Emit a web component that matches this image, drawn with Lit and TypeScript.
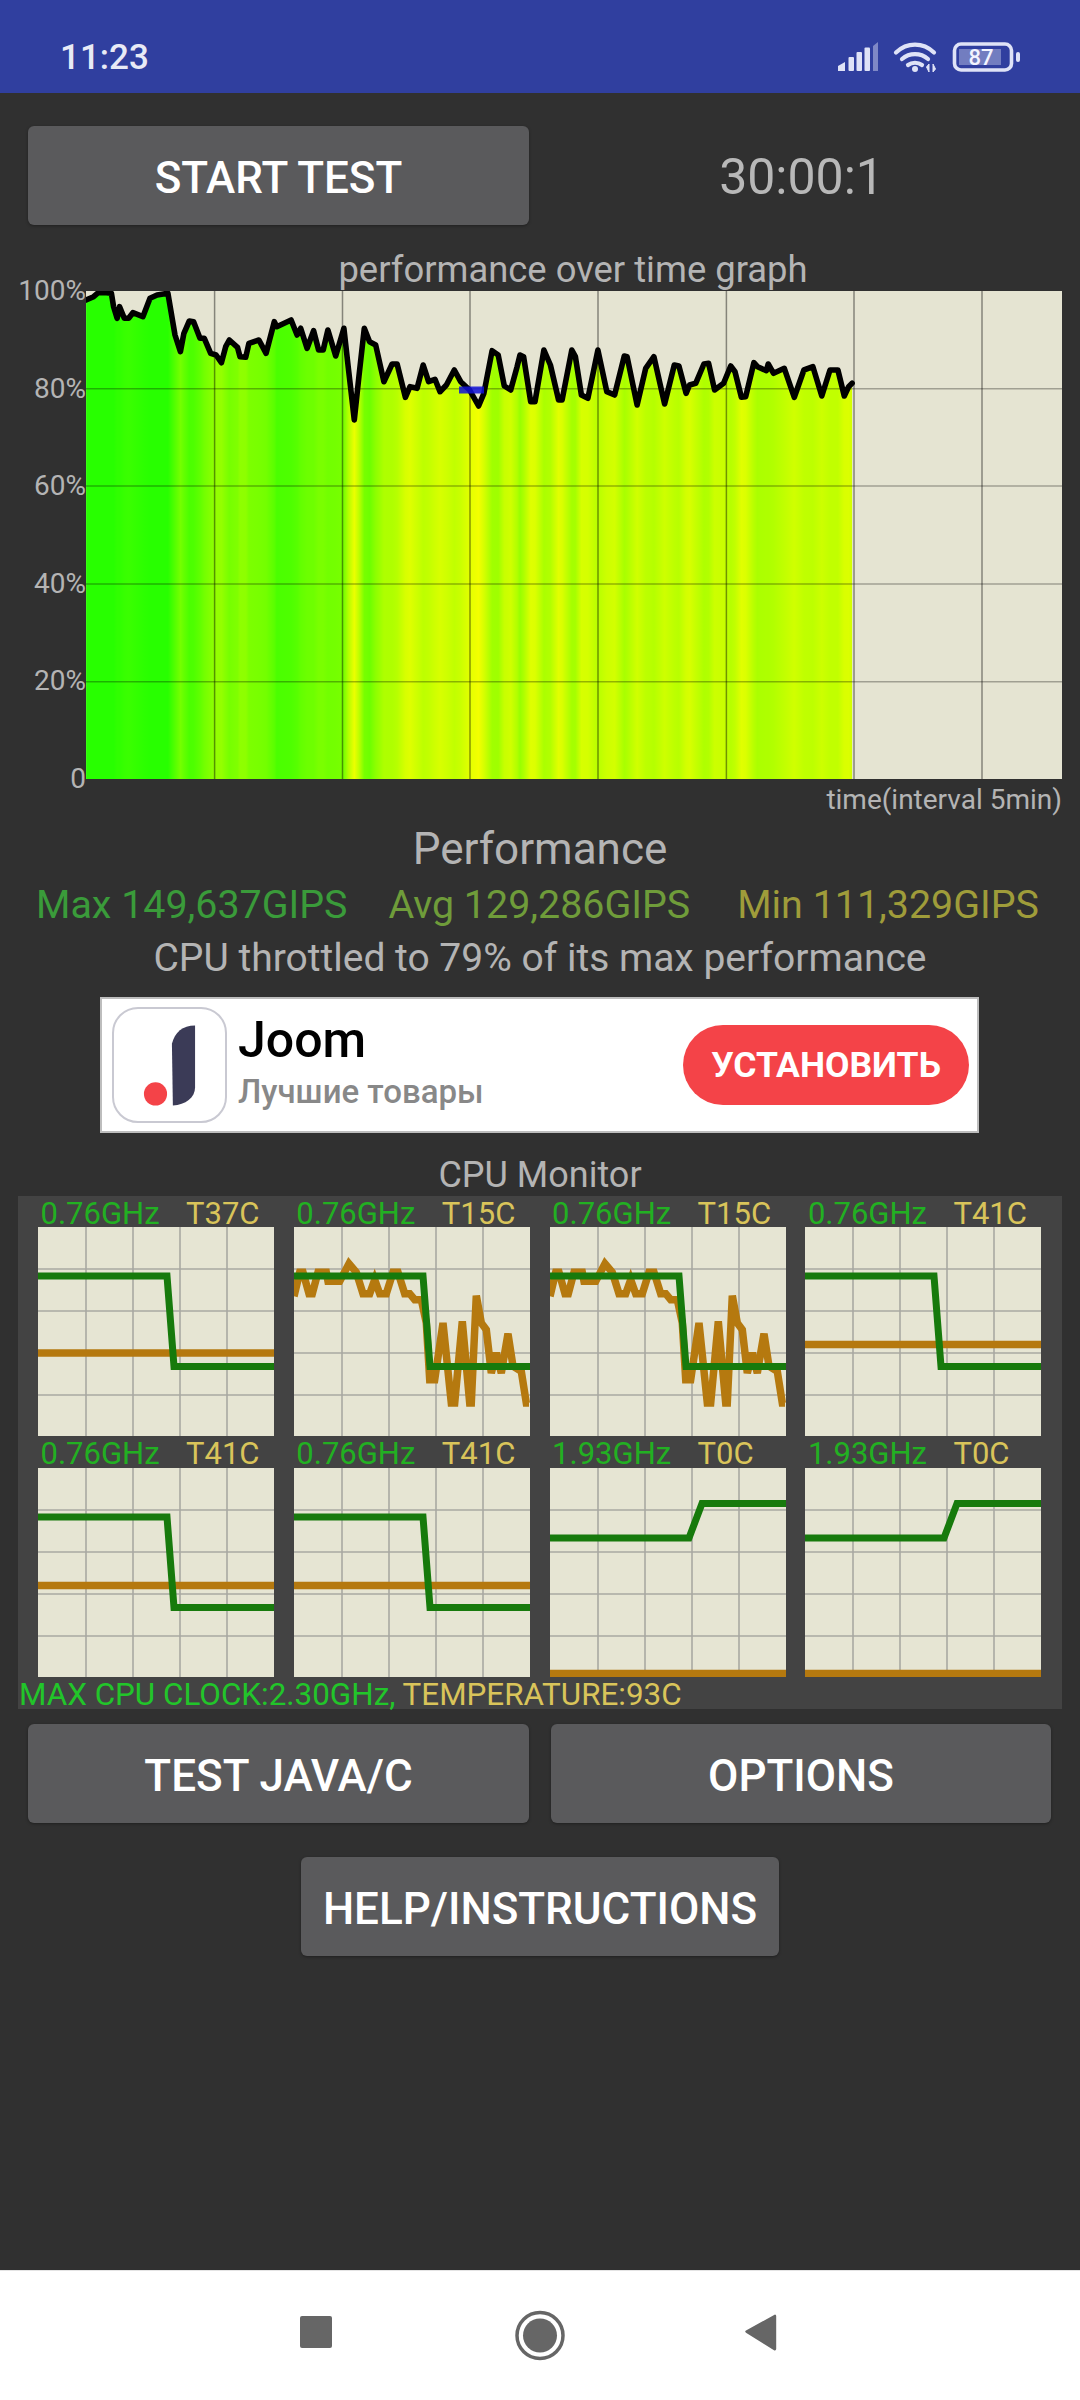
import { LitElement, html, css, svg } from "lit";
import { customElement } from "lit/decorators.js";

const A: [number, number][] = [[241,120],[262,110],[275,98],[298,98],[312,100],[318,140],[328,175],[335,140],[348,175],[360,175],[372,158],[400,170],[420,115],[440,105],[470,100],[490,225],[505,275],[515,220],[530,183],[542,185],[560,235],[572,235],[590,280],[605,285],[620,308],[632,260],[642,240],[665,262],[672,290],[688,292],[697,250],[725,240],[745,280],[768,185],[775,200],[815,180],[832,225],[842,205],[860,265],[878,212],[892,270],[905,270],[918,210],[940,288],[963,205],[975,320],[992,480],[1005,350],[1020,205],[1035,245],[1052,255],[1075,365],[1098,312],[1112,312],[1135,412],[1148,380],[1168,385],[1185,315],[1200,365],[1218,358],[1232,395],[1250,375],[1272,330],[1290,365],[1315,390],[1340,438],[1355,400],[1378,272],[1395,285],[1412,378],[1430,390],[1448,320]];
const B: [number, number][] = [[0,285],[10,290],[30,425],[42,425],[67,270],[85,315],[108,420],[118,420],[145,270],[155,290],[172,405],[190,415],[218,270],[243,395],[265,405],[292,288],[300,290],[328,435],[352,325],[375,290],[405,432],[432,315],[445,318],[465,400],[475,375],[492,370],[515,312],[528,310],[545,390],[570,370],[590,318],[602,335],[620,412],[632,410],[655,308],[665,320],[690,332],[695,312],[710,340],[740,325],[768,412],[795,330],[820,320],[845,408],[868,330],[890,330],[908,408],[920,380],[930,370]];

const perf: [number, number][] = [
  ...A.map(([x, y]) => [x / 2.8 - 86, y / 3 - 31] as [number, number]),
  ...B.map(([x, y]) => [434 + x / 2.8, y / 3 - 31] as [number, number]),
];
const perfLine = perf.map((p) => p.map((n) => n.toFixed(1)).join(",")).join(" ");
const perfEnd = perf[perf.length - 1][0];
const perfArea = `${perf[0][0].toFixed(1)},488 ${perfLine} ${perfEnd.toFixed(1)},488`;

const heat = perf.map((p, i) => {
  const a = perf[Math.max(0, i - 1)][1];
  const c = perf[Math.min(perf.length - 1, i + 1)][1];
  const y = 0.5 * p[1] + 0.25 * a + 0.25 * c;
  const v = 100 - y / 4.88;
  const r = Math.max(40, Math.min(255, Math.round((100 - v) * 11)));
  return { off: (p[0] / perfEnd).toFixed(4), col: `rgb(${r},255,0)` };
});

const toChart = (pts: number[][]) =>
  pts.map(([x, y]) => `${((x - 73) / 3).toFixed(1)},${((y - 112) / 3).toFixed(1)}`).join(" ");

const noisy = toChart([[73,320],[90,248],[100,248],[118,312],[128,312],[145,248],[170,248],[175,275],[210,275],[238,222],[260,248],[280,312],[300,312],[315,270],[330,312],[350,312],[370,248],[385,248],[405,312],[420,312],[435,330],[455,330],[470,400],[480,570],[495,570],[520,400],[545,640],[555,640],[578,395],[600,640],[605,640],[620,318],[635,400],[650,420],[665,550],[680,490],[695,550],[715,432],[730,530],[755,545],[770,640],[778,640]]);

const down = "0,49 129,49 136,139.5 236,139.5";
const up = "0,70 139,70 152,35.5 236,35.5";

const cores = [
  { ghz: "0.76GHz", t: "T37C", orange: "0,126 236,126", green: down },
  { ghz: "0.76GHz", t: "T15C", orange: noisy, green: down },
  { ghz: "0.76GHz", t: "T15C", orange: noisy, green: down },
  { ghz: "0.76GHz", t: "T41C", orange: "0,117.5 236,117.5", green: down },
  { ghz: "0.76GHz", t: "T41C", orange: "0,117.5 236,117.5", green: down },
  { ghz: "0.76GHz", t: "T41C", orange: "0,117.5 236,117.5", green: down },
  { ghz: "1.93GHz", t: "T0C", orange: "0,205.5 236,205.5", green: up },
  { ghz: "1.93GHz", t: "T0C", orange: "0,205.5 236,205.5", green: up },
];

@customElement("app-root")
export class AppRoot extends LitElement {
  static styles = css`
    :host { display: flex; flex-direction: column; width: 1080px; height: 2400px; background: #303030; font-family: Roboto, sans-serif; color: #b4b4b4; overflow: hidden; }
    .status { height: 93px; background: #303f9f; display: flex; align-items: center; justify-content: space-between; padding: 0 60px 0 60px; box-sizing: border-box; flex: none; position: relative; }
    .clock { font-size: 35px; font-weight: 500; color: #e8eaf6; margin-top: 22px; line-height: 40px; }
    .status-icons { display: block; position: absolute; left: 830px; top: 40px; }
    main { flex: 1; display: flex; flex-direction: column; min-height: 0; }
    .btn { background: #5a5a5c; color: #fff; border-radius: 6px; height: 99px; box-sizing: border-box; padding-top: 4px; display: flex; align-items: center; justify-content: center; font-size: 44px; font-weight: 500; box-shadow: 0 1px 3px rgba(0,0,0,.35); flex: none; }
    .top { display: flex; align-items: center; margin-top: 33px; padding-left: 28px; }
    .w501 { width: 501px; }
    .timer { flex: 1; text-align: center; font-size: 50px; padding: 3px 6px 0 0; color: #b8b8b8; }
    .title { height: 66px; box-sizing: border-box; padding: 23px 0 0 66px; line-height: 44px; text-align: center; font-size: 36.4px; }
    .graph { display: flex; height: 488px; }
    .yaxis { width: 86px; height: 522px; margin-top: -17px; display: flex; flex-direction: column; justify-content: space-between; text-align: right; font-size: 28px; line-height: 34px; flex: none; }
    .plot { width: 976px; height: 488px; display: block; }
    .xlabel { height: 45px; line-height: 42px; text-align: right; padding-right: 18px; font-size: 28px; }
    .heading { text-align: center; font-size: 44px; line-height: 50px; height: 56px; }
    .stats { display: flex; justify-content: space-between; padding: 0 41px 0 36px; font-size: 39.4px; line-height: 50px; height: 53.5px; }
    .max { color: #3a9b3a; } .avg { color: #6f9c3a; margin-right: 6px; } .min { color: #9f9c3a; }
    .note { text-align: center; font-size: 39px; line-height: 48px; height: 63.4px; }
    .ad { margin-left: 100px; width: 879px; height: 136px; box-sizing: border-box; background: #fff; border: 2px solid #bdbdbd; display: flex; align-items: center; padding: 0 8px 0 10px; flex: none; }
    .ad-icon { width: 115px; height: 116px; box-sizing: border-box; border: 2px solid #c9c9d2; border-radius: 26px; display: block; flex: none; }
    .ad-text { flex: 1; padding: 0 0 4px 11px; display: flex; flex-direction: column; }
    .ad-name { font-size: 50px; color: #000; line-height: 56px; font-weight: 500; }
    .ad-sub { font-size: 33px; color: #888; line-height: 42px; font-weight: 500; margin-top: 3px; }
    .ad-cta { width: 286px; height: 80px; border-radius: 40px; background: #f44348; color: #fff; font-size: 35.5px; font-weight: 700; display: flex; align-items: center; justify-content: center; }
    .monitor-title { text-align: center; font-size: 36px; height: 63px; line-height: 40px; box-sizing: border-box; padding-top: 22px; }
    .panel { margin-left: 18px; width: 1044px; background: #434343; box-sizing: border-box; flex: none; }
    .cores { display: grid; grid-template-columns: repeat(4, 236px); column-gap: 19.8px; padding-left: 20px; }
    .core-head { height: 31.4px; line-height: 35px; font-size: 31px; display: flex; padding-left: 2.5px; }
    .ghz { width: 145.5px; color: #22b022; } .temp { color: #d9c45a; }
    .core-chart { width: 236px; height: 209px; display: block; }
    .summary { height: 32px; line-height: 35px; font-size: 31.4px; white-space: nowrap; padding-left: 1px; color: #22c52a; }
    .btn-row { display: flex; gap: 22px; margin-top: 15.5px; padding-left: 28px; }
    .w500 { width: 500px; }
    .help { align-self: center; width: 478px; margin: 34px 0 0 0; }
    .nav { height: 130px; background: #fff; border-top: 1px solid #e4e4e4; box-sizing: border-box; flex: none; display: block; }
    .nav svg { display: block; }
  `;

  private plot() {
    const vs = [128.6, 256.5, 384, 512, 640.4, 768, 896];
    const hs = [97.7, 195, 293, 390.7];
    return html`<svg class="plot" viewBox="0 0 976 488">
      <defs>
        <linearGradient id="heat" x1="0" x2="1" y1="0" y2="0">
          ${heat.map((s) => svg`<stop offset=${s.off} stop-color=${s.col}></stop>`)}
        </linearGradient>
        <clipPath id="plotclip"><rect width="976" height="488"></rect></clipPath>
      </defs>
      <rect width="976" height="488" fill="#e5e4d2"></rect>
      <polygon points=${perfArea} fill="url(#heat)"></polygon>
      ${hs.map((y) => svg`<line x1="0" x2="976" y1=${y} y2=${y} stroke="#000" stroke-opacity=".3" stroke-width="1.6"></line>`)}
      ${vs.map((x) => svg`<line x1=${x} x2=${x} y1="0" y2="488" stroke="#000" stroke-opacity=".42" stroke-width="1.5"></line>`)}
      <g clip-path="url(#plotclip)">
        <polyline points=${perfLine} fill="none" stroke="#000" stroke-width="5.6" stroke-linejoin="round" stroke-linecap="round"></polyline>
        <line x1="373" x2="398" y1="99" y2="99" stroke="#1010d8" stroke-width="7" stroke-opacity=".85"></line>
      </g>
    </svg>`;
  }

  private core(c: (typeof cores)[number]) {
    const xs = [48, 95, 142, 189];
    const ys = [42, 84, 126, 168];
    return html`<div>
      <div class="core-head"><span class="ghz">${c.ghz}</span><span class="temp">${c.t}</span></div>
      <svg class="core-chart" viewBox="0 0 236 209">
        <rect width="236" height="209" fill="#e6e5d3"></rect>
        ${xs.map((x) => svg`<line x1=${x} x2=${x} y1="0" y2="209" stroke="#a9a9a2" stroke-width="1.6"></line>`)}
        ${ys.map((y) => svg`<line x1="0" x2="236" y1=${y} y2=${y} stroke="#a9a9a2" stroke-width="1.6"></line>`)}
        <polyline points=${c.orange} fill="none" stroke="#b5790f" stroke-width="7.5"></polyline>
        <polyline points=${c.green} fill="none" stroke="#177a0c" stroke-width="7"></polyline>
      </svg>
    </div>`;
  }

  render() {
    return html`
      <div class="status">
        <span class="clock">11:23</span>
        <svg class="status-icons" width="195" height="40" viewBox="830 40 195 40" fill="#dfe3f7">
          <path d="M838 71v-5l7-4v9z"></path>
          <rect x="848.5" y="57" width="5.5" height="14" rx="1"></rect>
          <rect x="856.5" y="52" width="5.5" height="19" rx="1"></rect>
          <rect x="864.5" y="47.5" width="5.5" height="23.5" rx="1"></rect>
          <path d="M873 46l5-4v29h-5z" opacity=".45"></path>
          <g fill="none" stroke="#dfe3f7" stroke-width="4.2" stroke-linecap="round">
            <path d="M896 52.5c11-10.5 27-10.5 38 0"></path>
            <path d="M902 59c7.5-6.5 18.5-6.5 26 0"></path>
            <path d="M908 65c4-3 10-3 14 0"></path>
          </g>
          <circle cx="915" cy="69" r="3"></circle>
          <path d="M929 72v-8l-2.5 3zM933 64v8l2.5-3z" stroke="#dfe3f7" stroke-width="1"></path>
          <rect x="954.5" y="44" width="57" height="26" rx="6.5" fill="none" stroke="#dfe3f7" stroke-width="3.6"></rect>
          <rect x="959" y="49" width="42" height="16" fill="#dfe3f7" opacity=".38"></rect>
          <rect x="1016" y="52" width="4" height="10" rx="2"></rect>
          <text x="981" y="65" text-anchor="middle" font-family="Roboto" font-size="22" font-weight="500" fill="#f2f4ff">87</text>
        </svg>
      </div>
      <main>
        <div class="top">
          <div class="btn w501">START TEST</div>
          <div class="timer">30:00:1</div>
        </div>
        <div class="title">performance over time graph</div>
        <div class="graph">
          <div class="yaxis"><span>100%</span><span>80%</span><span>60%</span><span>40%</span><span>20%</span><span>0</span></div>
          ${this.plot()}
        </div>
        <div class="xlabel">time(interval 5min)</div>
        <div class="heading">Performance</div>
        <div class="stats"><span class="max">Max 149,637GIPS</span><span class="avg">Avg 129,286GIPS</span><span class="min">Min 111,329GIPS</span></div>
        <div class="note">CPU throttled to 79% of its max performance</div>
        <div class="ad">
          <svg class="ad-icon" viewBox="0 0 115 116">
            <path d="M60 36c3-12 11-19 24-19v64c0 11-10 18-23 19z" fill="#3b3b57"></path>
            <circle cx="43" cy="88" r="12" fill="#f44348"></circle>
          </svg>
          <div class="ad-text"><span class="ad-name">Joom</span><span class="ad-sub">Лучшие товары</span></div>
          <div class="ad-cta">УСТАНОВИТЬ</div>
        </div>
        <div class="monitor-title">CPU Monitor</div>
        <div class="panel">
          <div class="cores">${cores.map((c) => this.core(c))}</div>
          <div class="summary">MAX CPU CLOCK:2.30GHz, <span class="temp">TEMPERATURE:93C</span></div>
        </div>
        <div class="btn-row">
          <div class="btn w501">TEST JAVA/C</div>
          <div class="btn w500">OPTIONS</div>
        </div>
        <div class="btn help">HELP/INSTRUCTIONS</div>
      </main>
      <div class="nav">
        <svg width="1080" height="129" viewBox="0 2271 1080 129" fill="#666">
          <rect x="300" y="2316" width="32" height="32" rx="2"></rect>
          <circle cx="540" cy="2335.5" r="23" fill="none" stroke="#666" stroke-width="3.5"></circle>
          <circle cx="540" cy="2335.5" r="17"></circle>
          <path d="M775 2314.5a1.5 1.5 0 0 1 1.2 1.5v33a1.5 1.5 0 0 1-2.2 1.2l-28-17.4a1.5 1.5 0 0 1 0-2.4z"></path>
        </svg>
      </div>
    `;
  }
}
